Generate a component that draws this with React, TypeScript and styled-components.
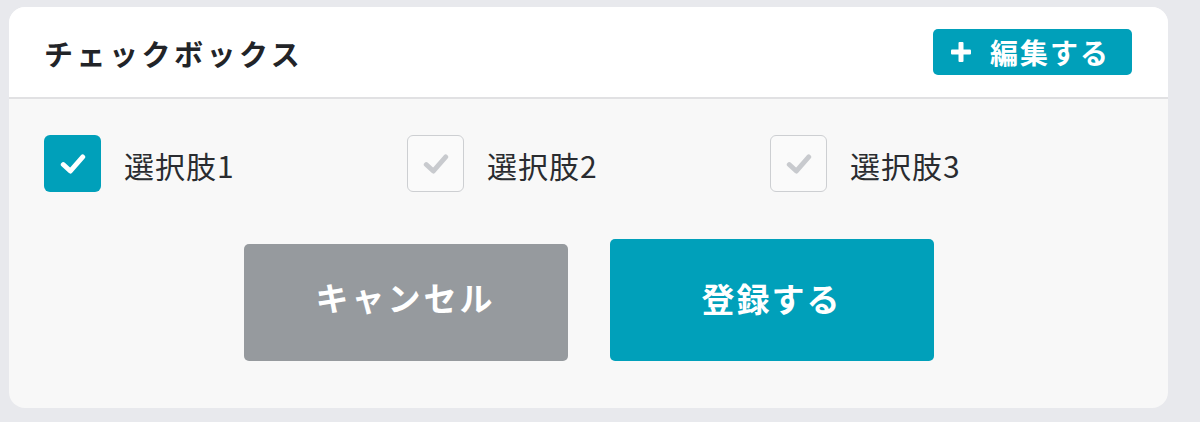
import React from "react";
import styled, { createGlobalStyle } from "styled-components";

const GlobalStyle = createGlobalStyle`
  html, body { margin: 0; padding: 0; background: #e8e9ed; }
  body { font-family: "Noto Sans CJK JP", "Noto Sans", sans-serif; }
`;

const Page = styled.div`
  padding: 7px 0 0 9px;
  height: 422px;
  box-sizing: border-box;
`;

const Card = styled.section`
  width: 1159px;
  height: 401px;
  border-radius: 16px;
  overflow: hidden;
  background: #f8f8f8;
  display: flex;
  flex-direction: column;
`;

const Header = styled.header`
  height: 90px;
  background: #ffffff;
  border-bottom: 2px solid #e1e1e3;
  display: flex;
  align-items: center;
  justify-content: space-between;
  padding: 0 36px 0 35px;
  flex-shrink: 0;
`;

const Title = styled.h2`
  margin: 0 0 -1px;
  font-size: 29px;
  font-weight: 700;
  color: #222428;
  letter-spacing: 3.5px;
`;

const EditButton = styled.button`
  width: 199px;
  height: 46px;
  border: none;
  border-radius: 5px;
  background: #00a0ba;
  color: #fff;
  font-family: inherit;
  font-size: 28px;
  font-weight: 700;
  display: flex;
  align-items: center;
  gap: 19px;
  padding: 0 0 0 18px;
  letter-spacing: 2px;
`;

const Body = styled.div`
  flex: 1;
  display: flex;
  flex-direction: column;
  padding: 36px 35px 0 35px;
`;

const Options = styled.div`
  display: grid;
  grid-template-columns: repeat(3, 1fr);
`;

const Option = styled.label`
  display: flex;
  align-items: center;
  gap: 23px;
`;

const Box = styled.span<{ $checked: boolean }>`
  width: 57px;
  height: 57px;
  box-sizing: border-box;
  border-radius: 6px;
  display: flex;
  align-items: center;
  justify-content: center;
  background: ${(p) => (p.$checked ? "#00a0ba" : "#fafafa")};
  border: ${(p) => (p.$checked ? "none" : "1.5px solid #cdcfd2")};
  color: ${(p) => (p.$checked ? "#ffffff" : "#c8cace")};
`;

const Label = styled.span`
  font-size: 30px;
  color: #2a2c30;
  letter-spacing: 1px;
  margin-top: 3px;
`;

const Actions = styled.div`
  margin-top: 47px;
  display: flex;
  justify-content: center;
  align-items: flex-end;
  gap: 42px;
`;

const ActionButton = styled.button<{ $primary?: boolean }>`
  width: 324px;
  height: ${(p) => (p.$primary ? "122px" : "117px")};
  border: none;
  border-radius: 5px;
  background: ${(p) => (p.$primary ? "#00a0ba" : "#969a9e")};
  color: #fff;
  font-family: inherit;
  font-size: 33px;
  font-weight: 700;
  letter-spacing: ${(p) => (p.$primary ? "2px" : "3px")};
  padding: ${(p) => (p.$primary ? "0 0 4px" : "0 0 12px")};
`;

const Check = () => (
  <svg width="26" height="22" viewBox="0 0 24 20" fill="none">
    <path d="M3 10.5 L9.5 16.5 L21 3.5" stroke="currentColor" strokeWidth="4.5" strokeLinecap="round" strokeLinejoin="round" />
  </svg>
);

const Plus = () => (
  <svg width="20" height="20" viewBox="0 0 20 20">
    <rect x="7.5" y="0" width="5" height="20" rx="1" fill="#fff" />
    <rect x="0" y="7.5" width="20" height="5" rx="1" fill="#fff" />
  </svg>
);

const options = [
  { label: "選択肢1", checked: true },
  { label: "選択肢2", checked: false },
  { label: "選択肢3", checked: false },
];

export default function App() {
  return (
    <>
      <GlobalStyle />
      <Page>
        <Card>
          <Header>
            <Title>チェックボックス</Title>
            <EditButton>
              <Plus />
              編集する
            </EditButton>
          </Header>
          <Body>
            <Options>
              {options.map((o) => (
                <Option key={o.label}>
                  <Box $checked={o.checked}>
                    <Check />
                  </Box>
                  <Label>{o.label}</Label>
                </Option>
              ))}
            </Options>
            <Actions>
              <ActionButton>キャンセル</ActionButton>
              <ActionButton $primary>登録する</ActionButton>
            </Actions>
          </Body>
        </Card>
      </Page>
    </>
  );
}
